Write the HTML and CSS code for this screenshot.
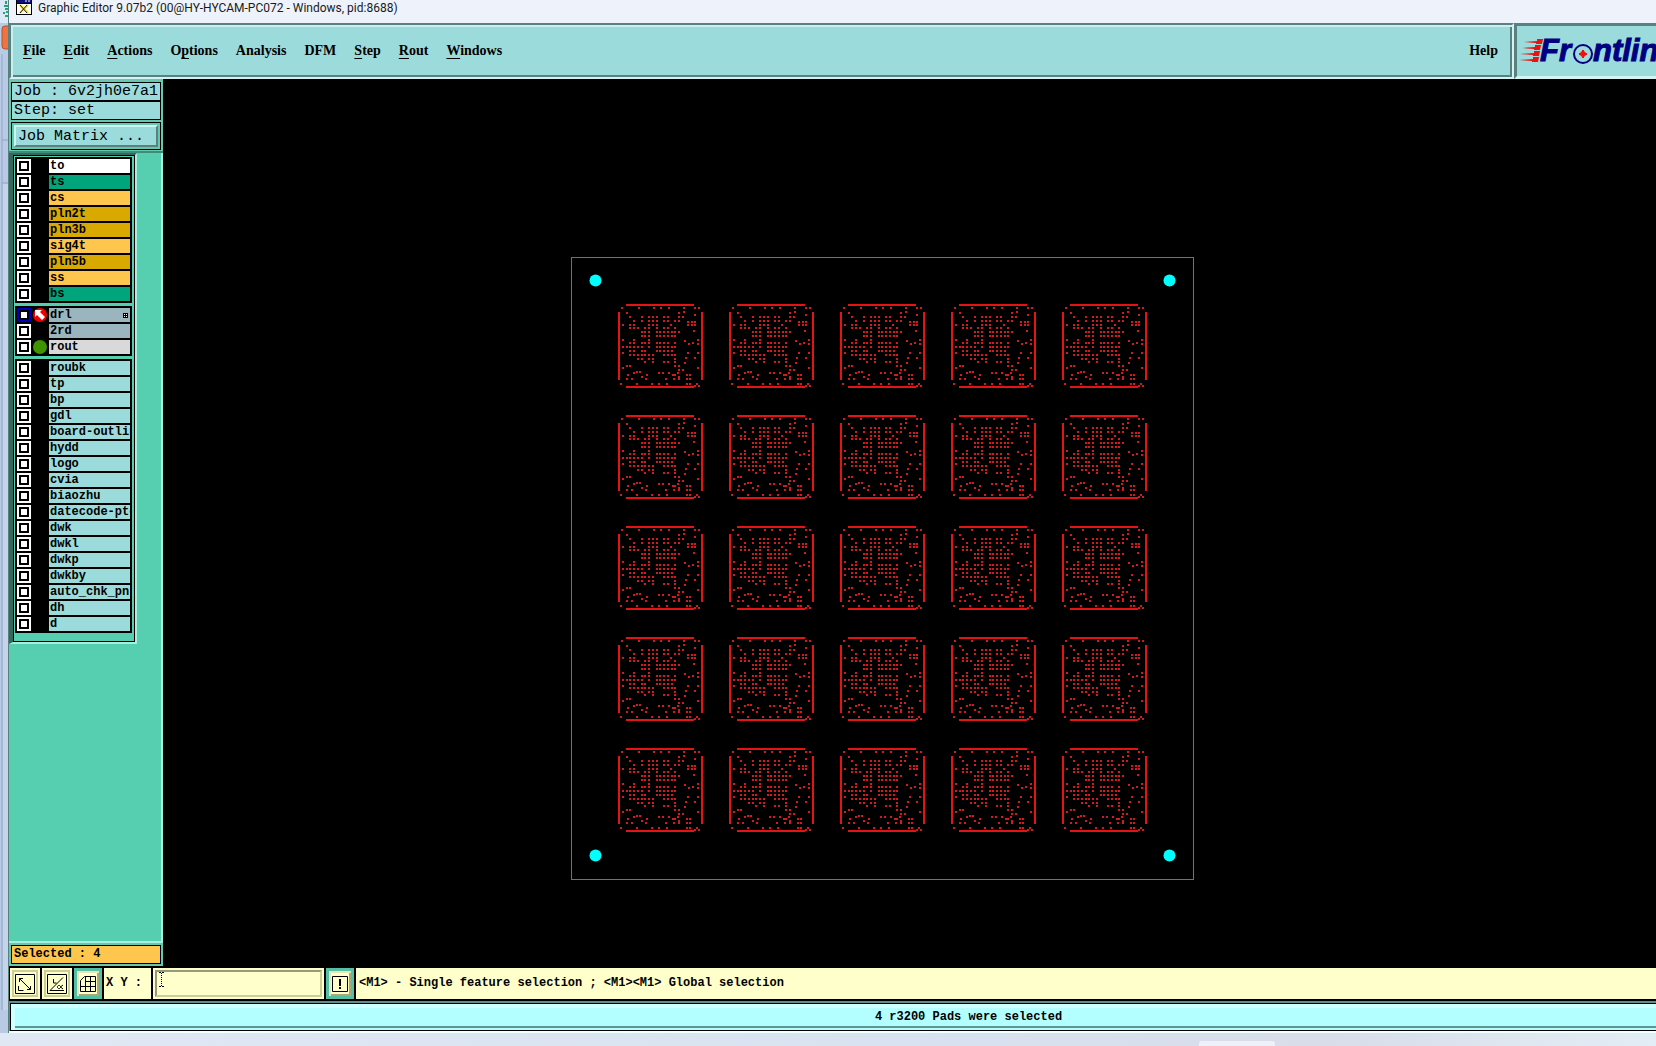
FILE: index.html
```html
<!DOCTYPE html>
<html lang="en">
    <head>
        <meta charset="utf-8">
        <title>Graphic Editor</title>
        <link rel="stylesheet" href="styles.css">
        <script src="board.js" defer></script>
    </head>
    <body>
        <svg class="desktop-edge" width="8" height="1016" viewBox="0 0 8 1016">
            <rect width="8" height="23" fill="#dbe9f7"/>
            <path d="M6 1v3M4 6h4M5 9h3M3 13h2M6 12h2M5 16h3" stroke="#1fa67a" stroke-width="2"/>
            <rect x="2" y="26" width="9" height="23" rx="3" fill="#f0743f" stroke="#b9502c"/>
            <path d="M2 54v956M2 140h6M2 183h6" stroke="#8fa6c8" fill="none"/>
            <rect x="3" y="184" width="5" height="826" fill="#c6d4ea"/>
        </svg>
        <div class="window">
            <header class="titlebar">
                <svg width="16" height="16" viewBox="0 0 16 16">
                    <rect x="0" y="0" width="16" height="15" fill="#000"/>
                    <rect x="1" y="0" width="14" height="3" fill="#10107a"/>
                    <path d="M9 1h2M12 1h2" stroke="#fff"/>
                    <rect x="1" y="4" width="14" height="10" fill="#fdfdf0"/>
                    <path d="M4 5l8 8M12 5l-8 8" stroke="#f0e020" stroke-width="2"/>
                    <path d="M4 5l7 8M11 5l-7 8" stroke="#222"/>
                </svg>
                <span>Graphic Editor 9.07b2 (00@HY-HYCAM-PC072 - Windows, pid:8688)</span>
            </header>

            <div class="top">
                <nav class="menubar">
                    <button><u>F</u>ile</button>
                    <button><u>E</u>dit</button>
                    <button><u>A</u>ctions</button>
                    <button>O<u>p</u>tions</button>
                    <button>Analysis</button>
                    <button>DFM</button>
                    <button><u>S</u>tep</button>
                    <button><u>R</u>out</button>
                    <button><u>W</u>indows</button>
                    <button class="help">Help</button>
                </nav>
                <div class="brand">
                    <svg width="150" height="44" viewBox="0 0 150 44" role="img" aria-label="Frontline">
                        <g fill="#ee1111">
                            <path d="M6 8l13-1v-2h6l-1 5h-6v-1z"/>
                            <path d="M4 14l13-1v-2h6l-1 5h-6v-1z"/>
                            <path d="M2 20l14-1v-2h6l-1 5h-6v-1z"/>
                            <path d="M1 26l14-1v-2h6l-1 5h-6v-1z"/>
                        </g>
                        <text class="logo-text" x="22" y="27">Fr</text>
                        <circle cx="65" cy="20" r="9" fill="none" stroke="#000080" stroke-width="2"/>
                        <path d="M65 16v8M61 20h8" stroke="#ee1111" stroke-width="2"/>
                        <path d="M65 16l4 4-4 4-4-4z" fill="#ee1111"/>
                        <text class="logo-text" x="75" y="27">ntline</text>
                    </svg>
                </div>
            </div>

            <div class="work">
                <aside class="sidebar">
                    <div class="job">
                        <div class="field">Job : 6v2jh0e7a1</div>
                        <div class="field">Step: set</div>
                        <div class="matrix"><button>Job Matrix ...</button></div>
                    </div>
                    <div class="layers-area">
                        <div class="layers">
                            <div class="group">
                                <label class="layer silk"><input type="checkbox"><i></i><span>to</span></label>
                                <label class="layer mask"><input type="checkbox"><i></i><span>ts</span></label>
                                <label class="layer signal"><input type="checkbox"><i></i><span>cs</span></label>
                                <label class="layer plane"><input type="checkbox"><i></i><span>pln2t</span></label>
                                <label class="layer plane"><input type="checkbox"><i></i><span>pln3b</span></label>
                                <label class="layer signal"><input type="checkbox"><i></i><span>sig4t</span></label>
                                <label class="layer plane"><input type="checkbox"><i></i><span>pln5b</span></label>
                                <label class="layer signal"><input type="checkbox"><i></i><span>ss</span></label>
                                <label class="layer mask"><input type="checkbox"><i></i><span>bs</span></label>
                            </div>
                            <div class="group">
                                <label class="layer drill">
                                    <input type="checkbox" checked>
                                    <i><svg width="14" height="14" viewBox="0 0 14 14"><circle cx="7" cy="7" r="7" fill="#ee0000"/><path d="M2 2h7l-2 2 5 5-3 3-5-5-2 2z" fill="#fff"/></svg></i>
                                    <span>drl<svg class="grid-mark" width="5" height="5" viewBox="0 0 5 5"><rect width="5" height="5" fill="#fff"/><path d="M0 0h5v5h-5zM1 1v1h1v-1zM3 1v1h1v-1zM1 3v1h1v-1zM3 3v1h1v-1z" fill-rule="evenodd"/></svg></span>
                                </label>
                                <label class="layer drill"><input type="checkbox"><i></i><span>2rd</span></label>
                                <label class="layer rout">
                                    <input type="checkbox">
                                    <i><svg width="14" height="14" viewBox="0 0 14 14"><circle cx="7" cy="7" r="7" fill="#3f9400"/></svg></i>
                                    <span>rout</span>
                                </label>
                            </div>
                            <div class="group">
                                <label class="layer"><input type="checkbox"><i></i><span>roubk</span></label>
                                <label class="layer"><input type="checkbox"><i></i><span>tp</span></label>
                                <label class="layer"><input type="checkbox"><i></i><span>bp</span></label>
                                <label class="layer"><input type="checkbox"><i></i><span>gdl</span></label>
                                <label class="layer"><input type="checkbox"><i></i><span>board-outline</span></label>
                                <label class="layer"><input type="checkbox"><i></i><span>hydd</span></label>
                                <label class="layer"><input type="checkbox"><i></i><span>logo</span></label>
                                <label class="layer"><input type="checkbox"><i></i><span>cvia</span></label>
                                <label class="layer"><input type="checkbox"><i></i><span>biaozhu</span></label>
                                <label class="layer"><input type="checkbox"><i></i><span>datecode-ptc</span></label>
                                <label class="layer"><input type="checkbox"><i></i><span>dwk</span></label>
                                <label class="layer"><input type="checkbox"><i></i><span>dwkl</span></label>
                                <label class="layer"><input type="checkbox"><i></i><span>dwkp</span></label>
                                <label class="layer"><input type="checkbox"><i></i><span>dwkby</span></label>
                                <label class="layer"><input type="checkbox"><i></i><span>auto_chk_pnl</span></label>
                                <label class="layer"><input type="checkbox"><i></i><span>dh</span></label>
                                <label class="layer"><input type="checkbox"><i></i><span>d</span></label>
                            </div>
                        </div>
                    </div>
                    <div class="selected"><div class="field">Selected : 4</div></div>
                </aside>
                <main class="canvas">
                    <svg id="board" width="623" height="623" viewBox="0 0 623 623">
                        <rect x="0.5" y="0.5" width="622" height="622" fill="none" stroke="#588c2e"/>
                        <g fill="#00ffff">
                            <circle cx="24.5" cy="23.5" r="6"/>
                            <circle cx="598.5" cy="23.5" r="6"/>
                            <circle cx="24.5" cy="598.5" r="6"/>
                            <circle cx="598.5" cy="598.5" r="6"/>
                        </g>
                    </svg>
                </main>
            </div>

            <div class="command">
                <button class="tool" aria-label="Zoom area">
                    <svg width="20" height="20" viewBox="0 0 20 20" fill="none" stroke="#000"><path d="M.5 .5h19v19h-19zM4.5 4.5l11 11M4.5 8v-3.5h3.5M15.5 12v3.5h-3.5M3.5 12v4.5h5"/></svg>
                </button>
                <button class="tool" aria-label="Angle">
                    <svg width="20" height="20" viewBox="0 0 20 20" fill="none" stroke="#000"><path d="M.5 .5h19v19h-19zM3 16.5h14M3 16.5l13-13M6.5 5v4h3M10.5 12.5l1-1h1l1 1v1l-1 1h-1l-1-1zM16 11l-2.5 2 2.5 2"/></svg>
                </button>
                <button class="tool framed" aria-label="Grid">
                    <svg width="16" height="16" viewBox="0 0 16 16" fill="none" stroke="#000"><path d="M4.5 .5h11v15h-15v-11zM.5 10.5h15M5.5 .5v15M10.5 .5v15M5.5 5.5h10"/></svg>
                </button>
                <label class="xy" for="coords">X Y :</label>
                <div class="entry">
                    <input type="text" id="coords">
                    <svg class="ibeam" width="5" height="15" viewBox="0 0 5 15" stroke="#000"><path d="M0 .5h2M3 .5h2M0 14.5h2M3 14.5h2"/><path d="M2.5 1v13" stroke-dasharray="1 1"/></svg>
                </div>
                <button class="tool framed" aria-label="Interrupt">
                    <svg width="16" height="16" viewBox="0 0 16 16" fill="none" stroke="#000"><path d="M.5 .5h15v15h-15z"/><path d="M8 3v7M8 11v2" stroke-width="2"/></svg>
                </button>
                <div class="message">&lt;M1&gt; - Single feature selection ; &lt;M1&gt;&lt;M1&gt; Global selection</div>
            </div>
            <footer class="status"><div>4 r3200 Pads were selected</div></footer>
        </div>
        <div class="taskbar"><span></span></div>
    </body>
</html>
```
FILE: styles.css
```css
* {
    box-sizing: border-box;
}
body {
    margin: 0;
    height: 100vh;
    overflow: hidden;
    display: grid;
    grid-template-columns: 8px 1fr;
    grid-template-rows: 1fr 13px;
    background: #b9cae4;
    font: bold 12px "Liberation Mono", monospace;
    color: #000;
}
button {
    margin: 0;
    padding: 0;
    border: 0;
    color: inherit;
    font: inherit;
}
svg {
    display: block;
    flex: none;
}
.window {
    min-width: 0;
    min-height: 0;
    display: flex;
    flex-direction: column;
    border-left: 1px solid #55807e;
}
.titlebar {
    height: 23px;
    flex: none;
    display: flex;
    gap: 6px;
    padding-left: 7px;
    background: #eef3fb;
    font: 12px/16px Roboto, sans-serif;
    color: #1a1a1a;
}

/* menu bar and logo */
.top {
    height: 56px;
    flex: none;
    display: flex;
    background: #9bdbdb;
}
.menubar {
    flex: 1;
    display: flex;
    align-items: center;
    gap: 18px;
    padding: 0 14px 0 12px;
    border: 2px solid;
    border-color: #5b8080 #d4f3f3 #d4f3f3 #5b8080;
    box-shadow: inset 2px 2px #c9f0f0, inset -2px -2px #5b8080;
    font: bold 14px "Liberation Serif", serif;
}
.menubar button {
    background: none;
}
.menubar u {
    text-underline-offset: 3px;
}
.menubar .help {
    margin-left: auto;
}
.brand {
    width: 142px;
    overflow: hidden;
    padding: 8px 0 0 1px;
    border: solid #5b8080;
    border-width: 3px 0 0 3px;
    border-bottom: 3px solid #d4f3f3;
}
.logo-text {
    font: italic bold 31px "Liberation Sans", sans-serif;
    fill: #000080;
    stroke: #000080;
    stroke-width: 1px;
}

.work {
    flex: 1;
    min-height: 0;
    display: flex;
    background: #000;
}
.sidebar {
    width: 154px;
    display: flex;
    flex-direction: column;
    background: #55cfb0;
}
.job {
    padding: 3px 2px 1px;
    background: #66c8ae;
    border-bottom: 2px solid #3f8a78;
    font-size: 15px;
    font-weight: normal;
}
.field {
    height: 19px;
    padding-left: 2px;
    line-height: 17px;
    white-space: pre;
    overflow: hidden;
    background: #9bdbdb;
    border: 1px solid #000;
}
.matrix {
    margin-top: 2px;
    padding: 2px;
    border: 1px solid #000;
}
.matrix button {
    width: 100%;
    height: 22px;
    padding-left: 2px;
    text-align: left;
    background: #9bdbdb;
    border: 2px solid;
    border-color: #ccf2f2 #5b8080 #5b8080 #ccf2f2;
}
.layers-area {
    flex: 1;
    min-height: 0;
    border-right: 2px solid #a5efdc;
    border-bottom: 2px solid #a5efdc;
}
.layers {
    width: 128px;
    padding: 2px 2px 9px 1px;
    border: solid #a5efdc;
    border-width: 2px 2px 2px 4px;
    border-left-color: #34685c;
    border-top-color: #34685c;
    box-shadow: inset 0 0 0 1px #000;
    display: flex;
    flex-direction: column;
    gap: 3px;
}
.group {
    margin: 0 1px;
    padding: 1px 2px;
    background: #000;
}
.layer {
    height: 16px;
    display: grid;
    grid-template-columns: 14px 18px 1fr;
    align-items: center;
}
.layer input {
    appearance: none;
    width: 14px;
    height: 14px;
    margin: 0;
    background: #fff;
    border: 2px solid #fff;
    box-shadow: inset 0 0 0 2px #000;
}
.layer input:checked {
    border-color: #0000b4;
}
.layer i {
    padding-left: 2px;
}
.layer span {
    height: 14px;
    padding-left: 1px;
    display: flex;
    align-items: center;
    line-height: 14px;
    overflow: hidden;
    white-space: nowrap;
    background: #9bdbdb;
}
.layer .grid-mark {
    margin: 0 2px 0 auto;
}
.silk span {
    background: #fff;
}
.mask span {
    background: #00a57c;
}
.signal span {
    background: #fec64d;
}
.plane span {
    background: #d9a900;
}
.drill span {
    background: #9bb5bf;
}
.rout span {
    background: #d9d9d9;
}
.selected {
    padding: 2px;
    background: #66c8ae;
    border-bottom: 1px solid #000;
}
.selected .field {
    background: #fec64d;
}
.canvas {
    flex: 1;
    min-width: 0;
    padding: 178px 0 0 408px;
    overflow: hidden;
}

/* command line */
.command {
    height: 34px;
    flex: none;
    display: flex;
    gap: 2px;
    padding: 1px 0 2px 1px;
    background: #000;
}
.tool {
    width: 30px;
    display: grid;
    place-content: center;
    background: #ffffcc;
    border: 2px solid #ffffcc;
    box-shadow: inset 0 0 0 2px #cdcd9a;
}
.tool.framed {
    width: 28px;
    border: 3px solid #55bfa5;
    box-shadow: inset 2px 2px #e5e5b8, inset -2px -2px #a8a87c;
}
.xy {
    width: 47px;
    padding-left: 2px;
    line-height: 31px;
    background: #ffffcc;
}
.entry {
    position: relative;
    width: 171px;
    padding: 2px;
    background: #ffffcc;
}
.entry input {
    width: 100%;
    height: 27px;
    padding: 2px 4px;
    font: inherit;
    background: #ffffcc;
    border: 2px solid;
    border-color: #98987a #cdcd9a #cdcd9a #98987a;
    outline: 0;
}
.ibeam {
    position: absolute;
    left: 6px;
    top: 4px;
    pointer-events: none;
}
.message {
    flex: 1;
    padding-left: 3px;
    line-height: 31px;
    white-space: nowrap;
    background: #ffffcc;
}
.status {
    flex: none;
    padding: 2px 0 0 1px;
    background: #5f8f8d;
    border-bottom: 2px solid #f0ffff;
}
.status div {
    height: 28px;
    padding-left: 270px;
    line-height: 26px;
    text-align: center;
    background: #b3ffff;
    border: 1px solid #000;
    border-right: 0;
    box-shadow: inset 4px 4px #d0ffff, inset 0 -2px #b3ffff, inset 0 -4px #5f9593;
}
.taskbar {
    grid-column: 1 / 3;
    padding: 8px 0 0 1199px;
    background: linear-gradient(90deg, #dfe8f3, #d8e1ef 60%, #d8dde9 80%, #e3edf6);
}
.taskbar span {
    display: block;
    width: 76px;
    height: 5px;
    border-radius: 3px 3px 0 0;
    background: #eef1f8;
}
```
FILE: board.js
```js
// drill hits of one unit, one entry per row: [y, x, x, ...]
const hits = [
    [3, 3, 20, 35, 42, 50, 65, 76, 80],
    [7, 65],
    [8, 8, 60],
    [10, 76],
    [12, 11, 23, 30, 34, 38, 45, 49, 60, 64],
    [16, 15, 23, 30, 34, 38, 45, 49, 56, 60],
    [17, 69, 73, 76],
    [20, 4, 11, 15, 30, 34, 38, 52, 69, 73, 76],
    [23, 11, 15, 19, 26, 30, 38, 45, 49, 56],
    [26, 75],
    [27, 23, 26, 30, 38, 41, 45, 49, 53, 56, 60],
    [31, 23, 26, 30, 38, 41, 45, 49, 53, 56],
    [35, 4, 15, 30, 79],
    [36, 66],
    [38, 11, 15, 23, 26, 30, 38, 41, 45, 49, 56, 74],
    [39, 70, 79],
    [42, 4, 8, 11, 15, 19, 23, 30, 38, 41, 45, 49, 53, 56],
    [46, 11, 15, 23, 26, 38, 41, 45, 49, 53],
    [48, 4, 69, 79],
    [50, 11, 15, 19, 23, 26, 30, 34, 45, 49, 53, 56],
    [53, 67, 76],
    [54, 19, 23, 30, 34, 56],
    [57, 26, 34, 45, 49, 56],
    [58, 66],
    [61, 8, 11, 56, 60],
    [63, 4, 79],
    [65, 60, 64],
    [67, 18, 21],
    [68, 15, 40, 44, 50, 59],
    [70, 9, 28, 54, 56, 68, 71],
    [72, 23, 60],
    [74, 8, 13, 27, 47, 55, 60, 68, 71],
    [79, 2, 18, 33, 40, 48, 68, 71, 78],
    [81, 76, 80],
];
const pitch = 111;
const dots = hits.map(([y, ...xs]) => xs.map(x => `M${x} ${y + 1}h2`).join("")).join("");
let units = "";
for (let row = 0; row < 5; row++) {
    for (let col = 0; col < 5; col++) {
        units += `<g transform="translate(${47 + col * pitch} ${47 + row * pitch})">
            <path d="M8 1h68M8 83h68M1 8v68M84 8v68" stroke="#e41414" stroke-width="2"/>
            <path d="${dots}" stroke="#d01c1c" stroke-width="2"/>
        </g>`;
    }
}
document.getElementById("board").insertAdjacentHTML("beforeend", units);
```
